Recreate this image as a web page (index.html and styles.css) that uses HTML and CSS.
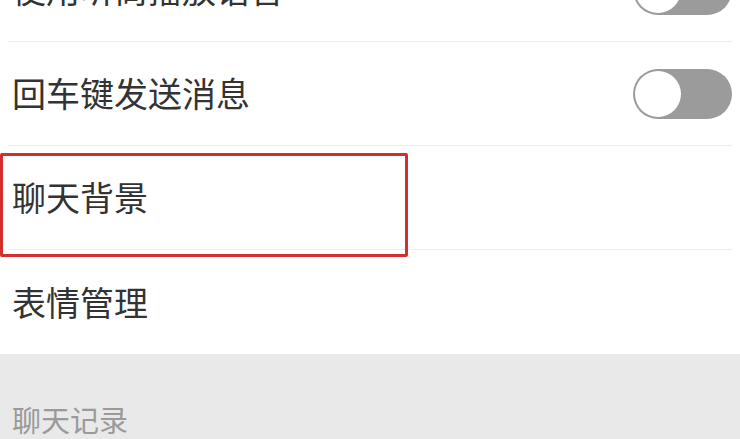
FILE: index.html
```html
<!DOCTYPE html>
<html>
<head>
  <meta charset="UTF-8">
  <title>聊天设置</title>
  <link rel="stylesheet" href="styles.css">
</head>
<body>
  <div class="settings">
    <div class="group">
      <div class="row">
        <span class="label">使用听筒播放语音</span>
        <span class="switch"><span class="knob"></span></span>
      </div>
      <div class="row">
        <span class="label">回车键发送消息</span>
        <span class="switch"><span class="knob"></span></span>
      </div>
      <div class="row">
        <span class="label">聊天背景</span>
        <span class="highlight"></span>
      </div>
      <div class="row">
        <span class="label">表情管理</span>
      </div>
    </div>
    <div class="section-title">聊天记录</div>
  </div>
</body>
</html>
```

FILE: styles.css
```css
* { box-sizing: border-box; }
body {
  margin: 0;
  height: 439px;
  overflow: hidden;
  background: #fff;
  font-family: "Noto Sans CJK SC", "Noto Sans", sans-serif;
}
.settings {
  margin-top: -62px;
}
.group {
  background: #fff;
}
.row {
  position: relative;
  height: 104px;
  margin: 0 8px;
  padding-left: 4px;
  display: flex;
  align-items: center;
  justify-content: space-between;
  border-bottom: 1px solid #ededed;
}
.row:last-child {
  border-bottom: none;
}
.label {
  font-size: 34px;
  color: #333;
  line-height: 1.2;
}
.switch {
  width: 99px;
  height: 50px;
  border-radius: 25px;
  background: #9b9b9b;
  padding: 2px;
  display: flex;
  align-items: center;
}
.knob {
  width: 46px;
  height: 46px;
  border-radius: 50%;
  background: #fff;
}
.highlight {
  position: absolute;
  left: -8px;
  top: 7px;
  width: 408px;
  height: 104px;
  border: 3px solid #d32f2f;
  border-radius: 2px;
}
.section-title {
  height: 85px;
  background: #e9e9e9;
  padding: 48px 12px 0;
  font-size: 29px;
  line-height: 1.2;
  color: #9a9a9a;
}
```
